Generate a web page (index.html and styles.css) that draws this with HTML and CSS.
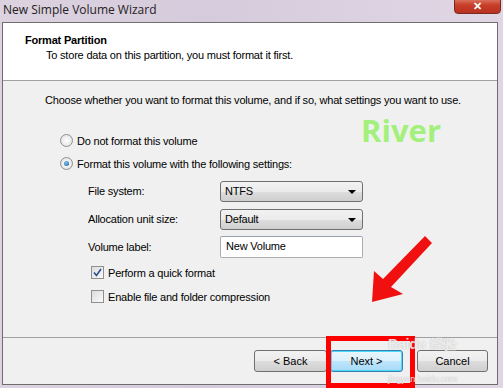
FILE: index.html
```html
<!DOCTYPE html>
<html lang="en">
<head>
    <meta charset="UTF-8">
    <title>New Simple Volume Wizard</title>
    <link rel="stylesheet" href="styles.css">
</head>
<body>
    <div class="titlebar">
        <span class="title">New Simple Volume Wizard</span>
        <span class="close">&#x2715;</span>
    </div>
    <div class="window">
        <div class="header">
            <h1>Format Partition</h1>
            <p>To store data on this partition, you must format it first.</p>
        </div>
        <div class="content">
            <p class="intro">Choose whether you want to format this volume, and if so, what settings you want to use.</p>
            <label class="option"><span class="radio"></span>Do not format this volume</label>
            <label class="option"><span class="radio checked"></span>Format this volume with the following settings:</label>
            <div class="fields">
                <span>File system:</span>
                <div class="select">NTFS<span class="caret"></span></div>
                <span>Allocation unit size:</span>
                <div class="select">Default<span class="caret"></span></div>
                <span>Volume label:</span>
                <div class="textbox">New Volume</div>
            </div>
            <label class="check"><span class="box checked">
                <svg width="9" height="9" viewBox="0 0 9 9"><path d="M1 4.5 L3.5 7.5 L8 1" fill="none" stroke="#2a4f8f" stroke-width="1.6"/></svg>
            </span>Perform a quick format</label>
            <label class="check"><span class="box"></span>Enable file and folder compression</label>
        </div>
        <div class="footer">
            <button class="btn">&lt; Back</button>
            <button class="btn primary">Next &gt;</button>
            <button class="btn cancel">Cancel</button>
        </div>
    </div>

    <div class="river">River</div>
    <svg class="arrow" width="70" height="80" viewBox="0 0 70 80">
        <polygon points="2,70 4,39 13,47 55,4 62,11 21,55 33,62" fill="#f01010"/>
    </svg>
    <div class="highlight"></div>
    <div class="watermark">Bai<span>du</span> 经验</div>
    <div class="watermark-url">jingyan.baidu.com</div>
</body>
</html>
```

FILE: styles.css
```css
body {
    margin: 0;
    width: 503px;
    height: 388px;
    overflow: hidden;
    background: linear-gradient(90deg, #ddd2df 0%, #d6cbdc 40%, #e0d6e4 100%);
    font-family: "Liberation Sans", Arial, sans-serif;
    font-size: 11px;
    letter-spacing: -0.2px;
    color: #000;
    position: relative;
}

.titlebar {
    height: 22px;
    position: relative;
}

.title {
    position: absolute;
    left: 3px;
    top: 1px;
    font-family: "Open Sans", sans-serif;
    font-size: 12px;
    letter-spacing: 0;
    color: #222;
}

.close {
    position: absolute;
    left: 454px;
    top: -6px;
    width: 45px;
    height: 18px;
    border: 1px solid #7a2a20;
    border-radius: 0 0 4px 4px;
    background: linear-gradient(#e8a090, #c8402a 55%, #b83020);
    color: #fff;
    font-size: 11px;
    font-weight: bold;
    text-align: center;
    line-height: 22px;
}

.window {
    margin: 0 5px 0 2px;
    height: 361px;
    border: 1px solid #6e6e6e;
    background: #f0f0f0;
    display: flex;
    flex-direction: column;
}

.header {
    background: #fff;
    height: 58px;
    border-bottom: 1px solid #a0a0a0;
    padding: 11px 0 0 22px;
    box-sizing: border-box;
}

.header h1 {
    margin: 0;
    font-size: 11px;
    font-weight: bold;
}

.header p {
    margin: 3px 0 0 21px;
}

.content {
    flex: 1;
    padding: 13px 0 0 42px;
    border-bottom: 1px solid #a0a0a0;
}

.intro {
    margin: 0 0 28px 0;
}

.option {
    display: flex;
    align-items: center;
    margin: 0 0 10px 15px;
    height: 13px;
}

.radio {
    width: 11px;
    height: 11px;
    border: 1px solid #8f8f8f;
    border-radius: 50%;
    background: radial-gradient(#fff, #dcdcdc);
    margin-right: 4px;
    box-sizing: content-box;
    position: relative;
}

.radio.checked::after {
    content: "";
    position: absolute;
    left: 3px;
    top: 3px;
    width: 5px;
    height: 5px;
    border-radius: 50%;
    background: radial-gradient(circle at 40% 35%, #7ec4f0, #1a5a9a);
}

.fields {
    display: grid;
    grid-template-columns: 132px 143px;
    grid-auto-rows: 22px;
    row-gap: 6px;
    align-items: center;
    margin: 6px 0 8px 43px;
}

.select {
    height: 19px;
    border: 1px solid #707070;
    border-radius: 3px;
    background: linear-gradient(#f2f2f2, #ebebeb 50%, #dddddd 51%, #cfcfcf);
    padding-left: 4px;
    display: flex;
    align-items: center;
    position: relative;
}

.caret {
    position: absolute;
    right: 6px;
    top: 8px;
    border-left: 4px solid transparent;
    border-right: 4px solid transparent;
    border-top: 4px solid #000;
}

.textbox {
    height: 22px;
    border: 1px solid #abadb3;
    border-top-color: #9aa0b0;
    border-radius: 2px;
    background: #fff;
    padding: 3px 0 0 5px;
    box-sizing: border-box;
}

.check {
    display: flex;
    align-items: center;
    margin: 0 0 11px 46px;
    height: 13px;
}

.box {
    width: 11px;
    height: 11px;
    border: 1px solid #8f8f8f;
    background: linear-gradient(135deg, #dcdcdc, #fafafa);
    margin-right: 4px;
    display: flex;
    align-items: center;
    justify-content: center;
}

.footer {
    height: 46px;
    display: flex;
    align-items: center;
    justify-content: flex-end;
    padding-right: 9px;
    gap: 3px;
}

.btn {
    width: 73px;
    height: 22px;
    border: 1px solid #707070;
    border-radius: 3px;
    background: linear-gradient(#f2f2f2, #ebebeb 50%, #dddddd 51%, #cfcfcf);
    font-family: "Liberation Sans", Arial, sans-serif;
    font-size: 11px;
    color: #000;
    padding: 0;
}

.btn.primary {
    border-color: #3c7fb1;
    background: linear-gradient(#eaf6fd, #d9f0fc 50%, #bee6fd 51%, #a7d9f5);
    box-shadow: inset 0 0 0 1px #48d8fb;
}

.btn.cancel {
    margin-left: 11px;
    width: 71px;
}

.river {
    position: absolute;
    left: 361px;
    top: 109px;
    font-family: "Open Sans", sans-serif;
    font-size: 31px;
    font-weight: bold;
    color: #a3f07c;
    letter-spacing: 0;
}

.arrow {
    position: absolute;
    left: 370px;
    top: 232px;
}

.highlight {
    position: absolute;
    left: 326px;
    top: 336px;
    width: 79px;
    height: 42px;
    border: 5px solid #f00;
}

.watermark {
    position: absolute;
    left: 388px;
    top: 337px;
    color: rgba(255, 255, 255, 0.8);
    font-size: 14px;
    font-weight: bold;
    line-height: 14px;
    text-shadow: 0 0 1px rgba(120, 120, 120, 0.6);
}

.watermark-url {
    position: absolute;
    left: 388px;
    top: 374px;
    color: rgba(255, 255, 255, 0.8);
    font-size: 9px;
    line-height: 10px;
    text-shadow: 0 0 1px rgba(120, 120, 120, 0.6);
}
```
